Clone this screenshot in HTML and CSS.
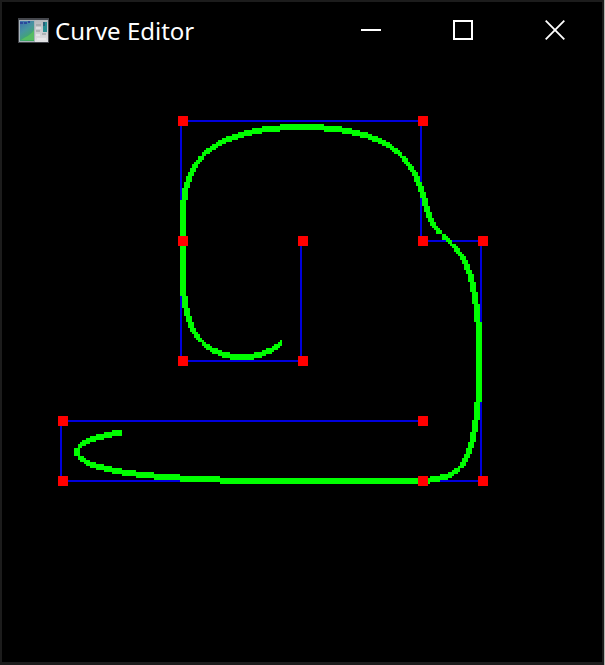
FILE: index.html
```
<!DOCTYPE html>
<html lang="en">
<head>
<meta charset="utf-8">
<title>Curve Editor</title>
<link rel="stylesheet" href="styles.css">
</head>
<body>
<main class="window">
  <header class="titlebar">
    <svg class="app-icon" viewBox="0 0 31 25" aria-hidden="true">
      <defs>
        <linearGradient id="screen" x1="0" y1="0" x2="0.5" y2="1">
          <stop offset="0" stop-color="#3f6fae"/>
          <stop offset="0.5" stop-color="#4694a0"/>
          <stop offset="1" stop-color="#3fae5c"/>
        </linearGradient>
        <linearGradient id="panel" x1="0" y1="0" x2="0" y2="1">
          <stop offset="0" stop-color="#b4b8bc"/>
          <stop offset="1" stop-color="#e2e2e4"/>
        </linearGradient>
      </defs>
      <rect width="31" height="25" fill="#44464c"/>
      <rect x="1" y="2" width="29" height="22" fill="#a9b4bb"/>
      <rect x="2" y="3" width="14" height="20" fill="url(#screen)"/>
      <path d="M2 4h3v2H2zM6 4h3v2H6zM10 3h2v2h-2z" fill="#2b489c"/>
      <path d="M3 22C7 19 12 18 16 12v10z" fill="#55bd62"/>
      <rect x="17" y="2" width="13" height="22" fill="url(#panel)"/>
      <rect x="25" y="4" width="4" height="10" fill="#268d92"/>
      <rect x="25" y="4" width="2" height="4" fill="#275f78"/>
      <path d="M18 7h5M18 13h4M24 16h4" stroke="#8d9498"/>
      <path d="M18 10h5M18 17h4M19 21h9" stroke="#f2f2f4"/>
    </svg>
    <h1 class="title">Curve Editor</h1>
    <div class="controls">
      <button class="control" type="button" aria-label="Minimize">
        <svg class="glyph" viewBox="0 0 20 20"><rect y="9" width="20" height="2" fill="#fff"/></svg>
      </button>
      <button class="control" type="button" aria-label="Maximize">
        <svg class="glyph" viewBox="0 0 20 20"><rect x="1" y="1" width="18" height="18" fill="none" stroke="#fff" stroke-width="2"/></svg>
      </button>
      <button class="control" type="button" aria-label="Close">
        <svg class="glyph" viewBox="0 0 20 20"><path d="M.7.7 19.3 19.3M19.3.7.7 19.3" stroke="#fff" stroke-width="1.8"/></svg>
      </button>
    </div>
  </header>
  <canvas class="viewport" id="viewport" width="300" height="300"></canvas>
</main>
<script src="curve.js"></script>
</body>
</html>
```

FILE: styles.css
```
* {
  box-sizing: border-box;
}

body {
  margin: 0;
  padding-right: 1px;
  background: #b0b0ac;
  font-family: "Noto Sans", "Open Sans", sans-serif;
}

.window {
  display: flex;
  flex-direction: column;
  min-height: 100vh;
  background: #000;
  border: 2px solid #1c1c1c;
  border-bottom-width: 3px;
}

.titlebar {
  display: flex;
  align-items: center;
  height: 60px;
  padding: 0 1px 3px 16px;
}

.app-icon {
  width: 31px;
  height: 25px;
  flex: none;
}

.title {
  flex: 1;
  margin: 0 0 0 6px;
  color: #fff;
  font-size: 24px;
  font-weight: 400;
  line-height: 32px;
  white-space: nowrap;
}

.controls {
  display: flex;
  align-self: flex-start;
  height: 56px;
}

.control {
  display: flex;
  align-items: center;
  justify-content: center;
  width: 92px;
  padding: 0;
  border: 0;
  background: transparent;
}

.glyph {
  display: block;
  width: 20px;
  height: 20px;
}

.viewport {
  display: block;
  width: 100%;
  aspect-ratio: 1;
  image-rendering: pixelated;
}
```

FILE: curve.js
```
const points = [
  [150, 90], [150, 150], [90, 150], [90, 90], [90, 30], [210, 30], [210, 90],
  [240, 90], [240, 210], [210, 210], [30, 210], [30, 180], [210, 180]
];
const ctx = document.getElementById("viewport").getContext("2d");

// Control polygon, one pixel wide.
ctx.fillStyle = "#0000dc";
for (let i = 1; i < points.length; i++) {
  const [ax, ay] = points[i - 1];
  const [bx, by] = points[i];
  ctx.fillRect(Math.min(ax, bx) - 1, Math.min(ay, by) - 1,
    Math.abs(bx - ax) + 1, Math.abs(by - ay) + 1);
}

// Uniform cubic B-spline, nudged up so that exact rows round upwards.
function spline(i, t) {
  const s = 1 - t;
  const w = [
    s * s * s / 6,
    (3 * t * t * t - 6 * t * t + 4) / 6,
    (-3 * t * t * t + 3 * t * t + 3 * t + 1) / 6,
    t * t * t / 6
  ];
  const at = axis => w.reduce((sum, k, n) => sum + k * points[i + n][axis], 0);
  return [at(0) + 0.01, at(1) - 0.01];
}

// Aliased line, three pixels thick across its minor axis.
function line(a, b) {
  const major = Math.abs(b[0] - a[0]) >= Math.abs(b[1] - a[1]) ? 0 : 1;
  const minor = 1 - major;
  if (a[major] > b[major]) [a, b] = [b, a];
  for (let p = Math.ceil(a[major] - 0.5); p + 0.5 < b[major]; p++) {
    const k = (p + 0.5 - a[major]) / (b[major] - a[major]);
    const q = Math.floor(a[minor] + k * (b[minor] - a[minor])) - 1;
    if (major === 0) ctx.fillRect(p, q, 1, 3);
    else ctx.fillRect(q, p, 3, 1);
  }
}

ctx.fillStyle = "#00ff00";
const steps = 20;
for (let i = 0; i + 3 < points.length; i++) {
  for (let n = 0; n < steps; n++) {
    line(spline(i, n / steps), spline(i, (n + 1) / steps));
  }
}

// Control handles.
ctx.fillStyle = "#ff0000";
for (const [x, y] of points) ctx.fillRect(x - 2, y - 3, 5, 5);
```
